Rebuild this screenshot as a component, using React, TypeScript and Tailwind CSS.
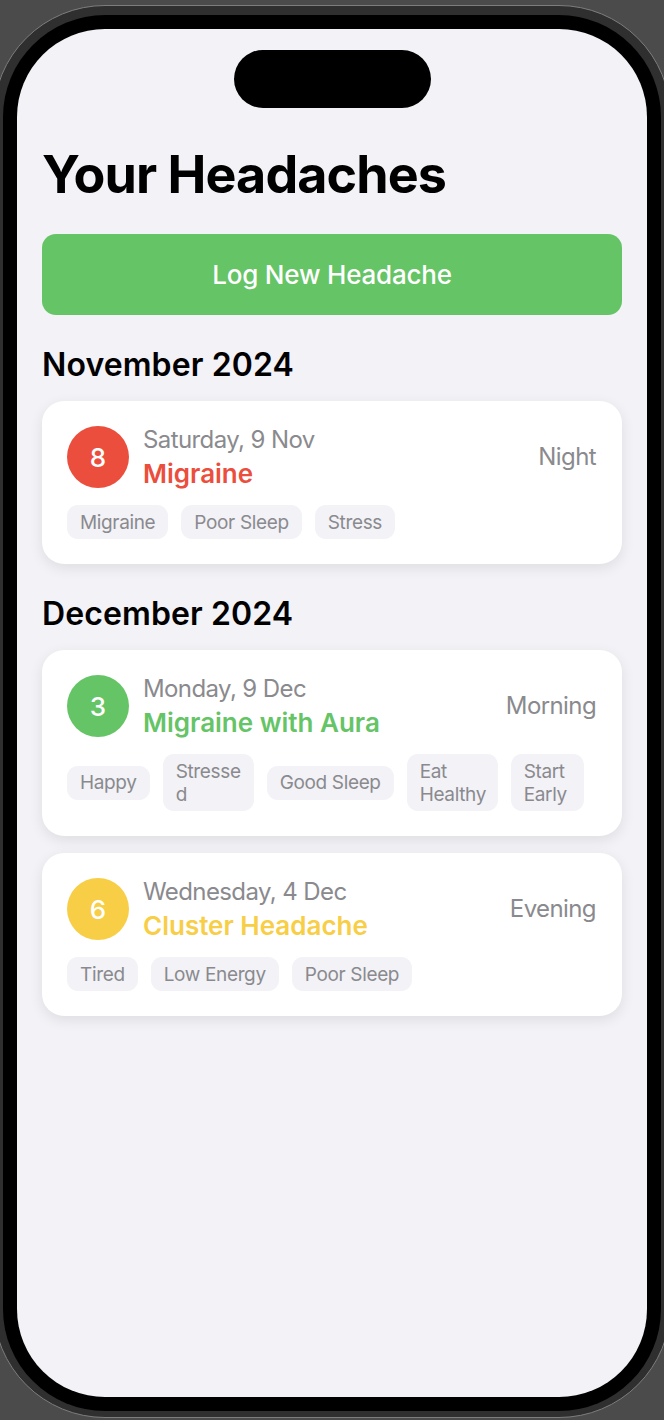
import React from "react";

type Tag = { label: string; cls?: string };
type Entry = {
  level: number;
  color: string;
  bg: string;
  date: string;
  title: string;
  time: string;
  tags: Tag[];
};

const nov: Entry[] = [
  {
    level: 8,
    color: "text-[#eb4e3d]",
    bg: "bg-[#eb4e3d]",
    date: "Saturday, 9 Nov",
    title: "Migraine",
    time: "Night",
    tags: [{ label: "Migraine" }, { label: "Poor Sleep" }, { label: "Stress" }],
  },
];

const dec: Entry[] = [
  {
    level: 3,
    color: "text-[#65c466]",
    bg: "bg-[#65c466]",
    date: "Monday, 9 Dec",
    title: "Migraine with Aura",
    time: "Morning",
    tags: [
      { label: "Happy" },
      { label: "Stressed", cls: "w-[91px] break-all" },
      { label: "Good Sleep" },
      { label: "Eat Healthy", cls: "w-[91px]" },
      { label: "Start Early", cls: "w-[73px]" },
    ],
  },
  {
    level: 6,
    color: "text-[#f7ce46]",
    bg: "bg-[#f7ce46]",
    date: "Wednesday, 4 Dec",
    title: "Cluster Headache",
    time: "Evening",
    tags: [{ label: "Tired" }, { label: "Low Energy" }, { label: "Poor Sleep" }],
  },
];

function Card({ e }: { e: Entry }) {
  return (
    <div className="rounded-[22px] bg-white pl-[25px] pr-[26px] pt-[22px] pb-[25px] shadow-[0_4px_14px_rgba(0,0,0,0.09)]">
      <div className="flex items-center">
        <div
          className={`flex h-[62px] w-[62px] shrink-0 items-center justify-center rounded-full ${e.bg} text-[26px] font-medium text-white`}
        >
          {e.level}
        </div>
        <div className="ml-[14px] flex flex-1 flex-col">
          <div className="text-[24px] leading-[34px] tracking-[-0.6px] text-[#8a8a8e]">{e.date}</div>
          <div className={`text-[26px] font-semibold leading-[34px] ${e.color}`}>{e.title}</div>
        </div>
        <div className="text-[24px] leading-[34px] tracking-[-0.6px] text-[#8a8a8e]">{e.time}</div>
      </div>
      <div className="mt-[14px] flex items-center gap-[13px]">
        {e.tags.map((t) => (
          <div
            key={t.label}
            className={`rounded-[11px] bg-[#f2f2f7] px-[13px] py-[5.5px] text-[19px] leading-[23px] tracking-[-0.35px] text-[#8a8a8e] ${t.cls ?? ""}`}
          >
            {t.label}
          </div>
        ))}
      </div>
    </div>
  );
}

export default function App() {
  return (
    <div
      className="h-[1420px] w-[664px] overflow-hidden bg-[#4b4b4b] pt-[5px]"
      style={{ fontFamily: "Inter, 'Noto Sans', sans-serif" }}
    >
      <div className="ml-[-7px] h-[1413px] w-[678px] rounded-[112px] border border-[#7d7d7d] bg-[#2f2f2f] px-[9px] pt-[9px] pb-[6px]">
        <div className="h-full rounded-[102px] bg-black p-[14px]">
          <div className="h-full overflow-hidden rounded-[88px] bg-[#f2f2f7] px-[25px]">
            <div className="mx-auto mt-[21px] h-[58px] w-[197px] rounded-full bg-black" />
            <h1 className="mt-[35px] text-[52px] font-bold leading-[64px] tracking-[-0.9px] text-black">
              Your Headaches
            </h1>
            <button className="mt-[27px] flex h-[81px] w-full items-center justify-center rounded-[14px] bg-[#65c466] text-[26px] font-medium tracking-[-0.2px] text-white">
              Log New Headache
            </button>
            <h2 className="mt-[30px] text-[32px] font-semibold leading-[40px] tracking-[0.1px] text-black">
              November 2024
            </h2>
            <div className="mt-[16px] flex flex-col gap-[17px]">
              {nov.map((e) => (
                <Card key={e.date} e={e} />
              ))}
            </div>
            <h2 className="mt-[30px] text-[32px] font-semibold leading-[40px] tracking-[0.1px] text-black">
              December 2024
            </h2>
            <div className="mt-[16px] flex flex-col gap-[17px]">
              {dec.map((e) => (
                <Card key={e.date} e={e} />
              ))}
            </div>
          </div>
        </div>
      </div>
    </div>
  );
}
